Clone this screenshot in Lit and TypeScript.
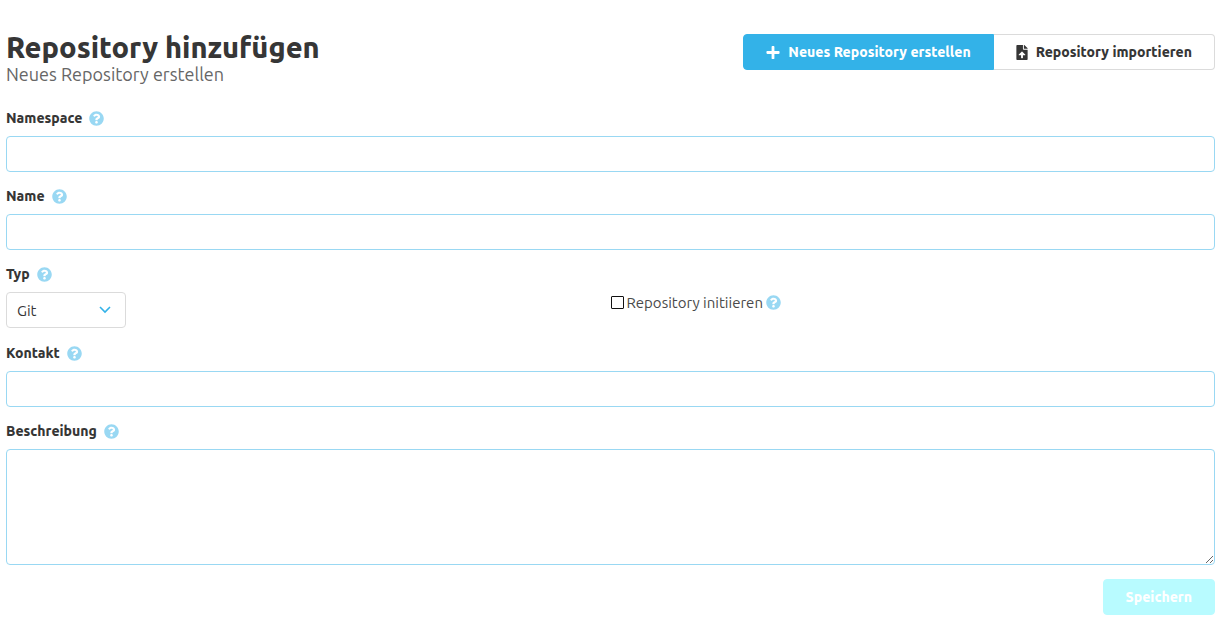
import { LitElement, html, css } from "lit";
import { customElement, property } from "lit/decorators.js";

@customElement("help-icon")
class HelpIcon extends LitElement {
  static styles = css`
    :host {
      display: inline-flex;
      color: #99d8f3;
    }
    .icon {
      width: 15px;
      height: 15px;
      fill: currentColor;
    }
  `;

  render() {
    return html`<svg class="icon" viewBox="0 0 512 512" aria-hidden="true">
      <path
        d="M504 256c0 136.997-111.043 248-248 248S8 392.997 8 256C8 119.083 119.043 8 256 8s248 111.083 248 248zM262.655 90c-54.497 0-89.255 22.957-116.549 63.758-3.536 5.286-2.353 12.415 2.715 16.258l34.699 26.31c5.205 3.947 12.621 3.008 16.665-2.122 17.864-22.658 30.113-35.797 57.303-35.797 20.429 0 45.698 13.148 45.698 32.958 0 14.976-12.363 22.667-32.534 33.976C247.128 238.528 216 254.941 216 296v4c0 6.627 5.373 12 12 12h56c6.627 0 12-5.373 12-12v-1.333c0-28.462 83.186-29.647 83.186-106.667 0-58.002-60.165-102-116.531-102zM256 338c-25.365 0-46 20.635-46 46 0 25.364 20.635 46 46 46s46-20.636 46-46c0-25.365-20.635-46-46-46z"
      ></path>
    </svg>`;
  }
}

@customElement("text-field")
class TextField extends LitElement {
  @property() label = "";
  @property() name = "";
  @property({ type: Boolean }) multiline = false;

  static styles = css`
    :host {
      display: flex;
      flex-direction: column;
      gap: 8px;
    }
    .head {
      display: flex;
      align-items: center;
      gap: 7px;
      height: 20px;
    }
    .label {
      font-weight: 800;
    }
    .control {
      display: block;
      box-sizing: border-box;
      width: 100%;
      height: 36px;
      margin: 0;
      padding: 6px 10px;
      border: 1px solid #99d8f3;
      border-radius: 4px;
      background: #fff;
      color: #363636;
      font: inherit;
      outline: none;
    }
    .control:focus {
      border-color: #33b2e8;
    }
    .area {
      height: 116px;
      resize: vertical;
    }
  `;

  render() {
    return html`
      <div class="head">
        <label class="label" for=${this.name}>${this.label}</label>
        <help-icon></help-icon>
      </div>
      ${this.multiline
        ? html`<textarea class="control area" id=${this.name} name=${this.name}></textarea>`
        : html`<input class="control" type="text" id=${this.name} name=${this.name} />`}
    `;
  }
}

@customElement("app-root")
class AppRoot extends LitElement {
  static styles = css`
    :host {
      display: block;
      box-sizing: border-box;
      padding: 34px 7px 9px 6px;
      background: #fff;
      color: #363636;
      font: 14px/21px Ubuntu, "Noto Sans", "Open Sans", sans-serif;
    }
    .header {
      display: flex;
      justify-content: space-between;
      align-items: flex-start;
      margin-bottom: 20px;
    }
    .title {
      margin: 0;
      font-size: 29px;
      line-height: 26px;
      font-weight: 800;
    }
    .subtitle {
      margin: 0;
      font-size: 18px;
      line-height: 28px;
      color: #666;
    }
    .actions {
      display: flex;
    }
    .button {
      display: inline-flex;
      align-items: center;
      justify-content: center;
      gap: 8px;
      box-sizing: border-box;
      height: 36px;
      margin: 0;
      padding: 0 22px;
      border: 1px solid #dbdbdb;
      border-radius: 4px;
      background: #fff;
      color: #363636;
      font: inherit;
      font-weight: 800;
      white-space: nowrap;
      cursor: pointer;
    }
    .first {
      border-color: #33b2e8;
      border-radius: 4px 0 0 4px;
      background: #33b2e8;
      color: #fff;
    }
    .last {
      border-left-width: 0;
      border-radius: 0 4px 4px 0;
    }
    .icon {
      height: 15px;
      fill: currentColor;
    }
    .plus {
      width: 14px;
    }
    .file {
      width: 12px;
    }
    .form {
      display: flex;
      flex-direction: column;
      gap: 14px;
    }
    .columns {
      display: grid;
      grid-template-columns: 1fr 1fr;
    }
    .type {
      display: flex;
      flex-direction: column;
      gap: 8px;
    }
    .head {
      display: flex;
      align-items: center;
      gap: 7px;
      height: 20px;
    }
    .label {
      font-weight: 800;
    }
    .select-row {
      display: flex;
      min-height: 37px;
    }
    .select-wrap {
      display: grid;
      align-items: center;
      width: 120px;
      height: 36px;
    }
    .select {
      grid-area: 1 / 1;
      appearance: none;
      box-sizing: border-box;
      width: 100%;
      height: 36px;
      margin: 0;
      padding: 0 36px 0 10px;
      border: 1px solid #dbdbdb;
      border-radius: 4px;
      background: #fff;
      color: #363636;
      font: inherit;
      font-size: 15px;
    }
    .chevron {
      grid-area: 1 / 1;
      justify-self: end;
      width: 12px;
      height: 8px;
      margin-right: 15px;
      fill: none;
      stroke: #33b2e8;
      stroke-width: 1.6;
      pointer-events: none;
    }
    .init {
      display: flex;
      align-items: center;
      align-self: end;
      gap: 3px;
      padding-bottom: 16px;
      color: #4a4a4a;
      font-size: 15px;
    }
    .check {
      appearance: none;
      box-sizing: border-box;
      width: 13px;
      height: 13px;
      margin: 0;
      border: 1px solid #111;
      border-radius: 1px;
      background: #fff;
      outline: 0;
    }
    .check:checked {
      background: #33b2e8;
    }
    .footer {
      display: flex;
      justify-content: flex-end;
    }
    .save {
      border-color: #b8fbff;
      background: #b8fbff;
      color: #fff;
      cursor: not-allowed;
    }
  `;

  render() {
    return html`
      <header class="header">
        <div>
          <h1 class="title">Repository hinzufügen</h1>
          <p class="subtitle">Neues Repository erstellen</p>
        </div>
        <div class="actions">
          <button class="button first" type="button">
            <svg class="icon plus" viewBox="0 0 448 512" aria-hidden="true">
              <path
                d="M416 208H272V64c0-17.67-14.33-32-32-32h-32c-17.67 0-32 14.33-32 32v144H32c-17.67 0-32 14.33-32 32v32c0 17.67 14.33 32 32 32h144v144c0 17.67 14.33 32 32 32h32c17.67 0 32-14.33 32-32V304h144c17.67 0 32-14.33 32-32v-32c0-17.67-14.33-32-32-32z"
              ></path>
            </svg>
            <span>Neues Repository erstellen</span>
          </button>
          <button class="button last" type="button">
            <svg class="icon file" viewBox="0 0 384 512" aria-hidden="true">
              <path
                d="M224 136V0H24C10.7 0 0 10.7 0 24v464c0 13.3 10.7 24 24 24h336c13.3 0 24-10.7 24-24V160H248c-13.2 0-24-10.8-24-24zm65.18 216.01H224v80c0 8.84-7.16 16-16 16h-32c-8.84 0-16-7.16-16-16v-80H94.82c-14.28 0-21.41-17.29-11.27-27.36l96.42-95.7c6.65-6.61 17.39-6.61 24.04 0l96.42 95.7c10.15 10.07 3.03 27.36-11.25 27.36zM377 105L279.1 7c-4.5-4.5-10.6-7-17-7H256v128h128v-6.1c0-6.3-2.5-12.4-7-16.9z"
              ></path>
            </svg>
            <span>Repository importieren</span>
          </button>
        </div>
      </header>
      <form class="form">
        <text-field label="Namespace" name="namespace"></text-field>
        <text-field label="Name" name="name"></text-field>
        <div class="columns">
          <div class="type">
            <div class="head">
              <label class="label" for="type">Typ</label>
              <help-icon></help-icon>
            </div>
            <div class="select-row">
              <div class="select-wrap">
                <select class="select" id="type" name="type">
                  <option>Git</option>
                </select>
                <svg class="chevron" viewBox="0 0 12 8" aria-hidden="true">
                  <path d="M1 1l5 5 5-5"></path>
                </svg>
              </div>
            </div>
          </div>
          <div class="init">
            <input class="check" type="checkbox" id="init" name="init" />
            <label for="init">Repository initiieren</label>
            <help-icon></help-icon>
          </div>
        </div>
        <text-field label="Kontakt" name="contact"></text-field>
        <text-field label="Beschreibung" name="description" multiline></text-field>
        <div class="footer">
          <button class="button save" type="submit" disabled>Speichern</button>
        </div>
      </form>
    `;
  }
}
